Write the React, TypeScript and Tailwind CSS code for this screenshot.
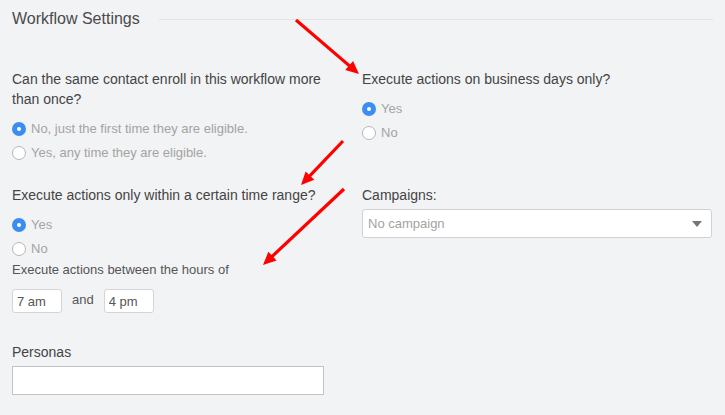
import React from "react";

type Arrow = { x1: number; y1: number; x2: number; y2: number };

const arrows: Arrow[] = [
  { x1: 296, y1: 20, x2: 359, y2: 74 },
  { x1: 343, y1: 141, x2: 301, y2: 185 },
  { x1: 344, y1: 189, x2: 263, y2: 265 },
];

function ArrowShape({ x1, y1, x2, y2 }: Arrow) {
  const dx = x2 - x1;
  const dy = y2 - y1;
  const len = Math.hypot(dx, dy);
  const ux = dx / len;
  const uy = dy / len;
  const headLen = 13;
  const headW = 6;
  const bx = x2 - ux * headLen;
  const by = y2 - uy * headLen;
  const pts = `${x2},${y2} ${bx - uy * headW},${by + ux * headW} ${bx + uy * headW},${by - ux * headW}`;
  return (
    <g>
      <line x1={x1} y1={y1} x2={bx + ux * 2} y2={by + uy * 2} stroke="#ff0000" strokeWidth={3.2} />
      <polygon points={pts} fill="#ff0000" />
    </g>
  );
}

function Radio({ checked, label }: { checked?: boolean; label: string }) {
  return (
    <label className="flex h-6 items-center gap-[5px] text-[13px] text-[#a3a3a3]">
      {checked ? (
        <span className="flex h-[14px] w-[14px] items-center justify-center rounded-full bg-[#3c8df3]">
          <span className="h-1 w-1 rounded-full bg-white" />
        </span>
      ) : (
        <span className="h-[14px] w-[14px] rounded-full border border-[#b4b6b8] bg-white" />
      )}
      <span>{label}</span>
    </label>
  );
}

export default function App() {
  return (
    <div
      className="relative h-[415px] w-[725px] overflow-hidden bg-[#f2f3f5] px-3 pt-[7px] text-[#444]"
      style={{ fontFamily: '"Liberation Sans", Arial, sans-serif' }}
    >
      {/* Header */}
      <div className="flex items-center">
        <h2 className="text-[16px] leading-6 text-[#4a4a4a]">Workflow Settings</h2>
        <div className="ml-[19px] h-px flex-1 bg-[#e1e3e6]" />
      </div>

      <div className="mt-[38px] grid grid-cols-[340px_350px] gap-x-[10px]">
        {/* Row 1 left */}
        <div>
          <p className="text-[14px] leading-5">
            Can the same contact enroll in this workflow more than once?
          </p>
          <div className="mt-2">
            <Radio checked label="No, just the first time they are eligible." />
            <Radio label="Yes, any time they are eligible." />
          </div>
        </div>

        {/* Row 1 right */}
        <div>
          <p className="text-[14px] leading-5">Execute actions on business days only?</p>
          <div className="mt-[8px]">
            <Radio checked label="Yes" />
            <Radio label="No" />
          </div>
        </div>

        {/* Row 2 left */}
        <div className="mt-5">
          <p className="text-[14px] leading-5">Execute actions only within a certain time range?</p>
          <div className="mt-2">
            <Radio checked label="Yes" />
            <Radio label="No" />
          </div>
          <p className="text-[13px] leading-[18px] text-[#555]">Execute actions between the hours of</p>
          <div className="mt-[10px] flex items-center">
            <input
              defaultValue="7 am"
              className="h-6 w-[50px] rounded-[3px] border border-[#d3d5d8] bg-white px-[4px] text-[13px] text-[#555] outline-none"
            />
            <span className="mx-[10px] -mt-[3px] text-[13px] text-[#555]">and</span>
            <input
              defaultValue="4 pm"
              className="h-6 w-[50px] rounded-[3px] border border-[#d3d5d8] bg-white px-[4px] text-[13px] text-[#555] outline-none"
            />
          </div>
          <p className="mt-[29px] text-[14px] leading-5">Personas</p>
          <input className="mt-1 h-[29px] w-[312px] border border-[#c1c4c7] bg-white outline-none" />
        </div>

        {/* Row 2 right */}
        <div className="mt-5">
          <p className="text-[14px] leading-5">Campaigns:</p>
          <div className="mt-1 flex h-[29px] items-center justify-between rounded-[3px] border border-[#d0d2d5] bg-white pl-[5px] pr-[9px]">
            <span className="text-[13px] text-[#a3a3a3]">No campaign</span>
            <span className="h-0 w-0 border-x-[5px] border-t-[6px] border-x-transparent border-t-[#777]" />
          </div>
        </div>
      </div>

      {/* Annotation arrows */}
      <svg className="pointer-events-none absolute inset-0" width={725} height={415}>
        {arrows.map((a, i) => (
          <ArrowShape key={i} {...a} />
        ))}
      </svg>
    </div>
  );
}
